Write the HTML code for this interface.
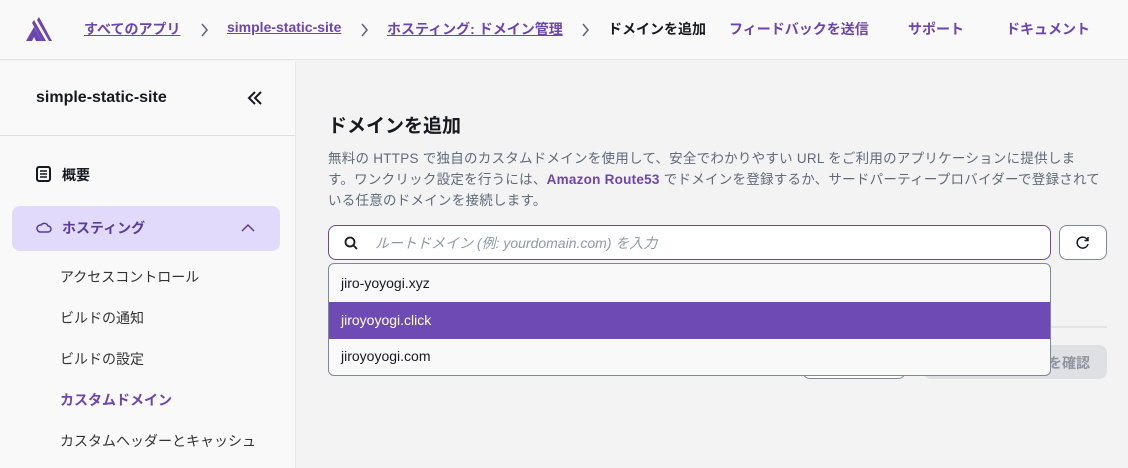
<!DOCTYPE html>
<html><head><meta charset="utf-8"><style>
*{box-sizing:border-box;margin:0;padding:0}
body{width:1128px;height:468px;overflow:hidden;font-family:"Liberation Sans","Noto Sans CJK JP",sans-serif;background:#f3f3f3;color:#16191f;position:relative}
.hdr{position:absolute;left:0;top:0;width:1128px;height:60px;background:#f9f9f9;border-bottom:1px solid #e4e4e8}
.hdr a{position:absolute;top:19px;font-size:14px;font-weight:bold;color:#6c45b0;text-decoration:underline}
.hdr .t{position:absolute;top:19px;font-size:14px;font-weight:bold}
.hdr .n{position:absolute;top:19px;font-size:14px;font-weight:bold;color:#6c45b0}
.sep{position:absolute;top:23px}
.side{position:absolute;left:0;top:61px;width:296px;height:407px;background:#f9f9f9;border-right:1px solid #e8e8ec}
.sb{position:absolute;font-size:14px}
</style></head><body>
<div class="hdr">
<svg style="position:absolute;left:26px;top:17px" width="28" height="26" viewBox="0 0 28 26"><path d="M0 24 L8 10 L16 24 Z M6 24 L8 20 L10 24Z" fill="#6c45b0" fill-rule="evenodd"/><path d="M8 3 L20 24 L16 24 L6 6Z M13 0 L26 24 L23 24 L11 3Z" fill="#6c45b0"/></svg>
<a style="left:84px">すべてのアプリ</a><svg class="sep" style="left:200px" width="9" height="14"><path d="M2 1L7 7L2 13" fill="none" stroke="#5f6b7a" stroke-width="1.6"/></svg>
<a style="left:227px">simple-static-site</a><svg class="sep" style="left:360px" width="9" height="14"><path d="M2 1L7 7L2 13" fill="none" stroke="#5f6b7a" stroke-width="1.6"/></svg>
<a style="left:387px">ホスティング: ドメイン管理</a><svg class="sep" style="left:581px" width="9" height="14"><path d="M2 1L7 7L2 13" fill="none" stroke="#5f6b7a" stroke-width="1.6"/></svg>
<span class="t" style="left:608px">ドメインを追加</span>
<span class="n" style="left:729px">フィードバックを送信</span>
<span class="n" style="left:908px">サポート</span>
<span class="n" style="left:1006px">ドキュメント</span>
</div>
<div class="side">
<div class="sb" style="left:36px;top:28px;font-size:16px;font-weight:bold">simple-static-site</div>
<svg style="position:absolute;left:247px;top:29px" width="16" height="16"><path d="M8 2L2 8L8 14M14 2L8 8L14 14" fill="none" stroke="#16191f" stroke-width="2"/></svg>
<div style="position:absolute;left:0;top:74px;width:296px;border-top:1px solid #e0e0e4"></div>
<svg style="position:absolute;left:36px;top:105px" width="15" height="16"><rect x="1" y="1" width="13" height="14" rx="2" fill="none" stroke="#16191f" stroke-width="2"/><path d="M4 5h7M4 8h7M4 11h7" stroke="#16191f" stroke-width="1.5"/></svg>
<div class="sb" style="left:62px;top:104px;font-weight:bold">概要</div>
<div style="position:absolute;left:12px;top:145px;width:268px;height:45px;background:#e2dafa;border-radius:8px"></div>
<svg style="position:absolute;left:36px;top:160px" width="16" height="12"><path d="M4 11 H12 A3 3 0 0 0 12 5 A4 4 0 0 0 5 4 A3.5 3.5 0 0 0 4 11Z" fill="none" stroke="#5a3a9a" stroke-width="1.5"/></svg>
<div class="sb" style="left:62px;top:157px;font-weight:bold;color:#5a3a9a">ホスティング</div>
<svg style="position:absolute;left:241px;top:162px" width="14" height="9"><path d="M1 8L7 2L13 8" fill="none" stroke="#5a3a9a" stroke-width="1.5"/></svg>
<div class="sb" style="left:60px;top:206px;color:#333">アクセスコントロール</div>
<div class="sb" style="left:60px;top:247px;color:#333">ビルドの通知</div>
<div class="sb" style="left:60px;top:288px;color:#333">ビルドの設定</div>
<div class="sb" style="left:60px;top:329px;color:#6c45b0;font-weight:bold">カスタムドメイン</div>
<div class="sb" style="left:60px;top:370px;color:#333">カスタムヘッダーとキャッシュ</div>
</div>
<div style="position:absolute;left:328px;top:111px;font-size:19px;font-weight:bold">ドメインを追加</div>
<div style="position:absolute;left:328px;top:148px;width:780px;font-size:13.5px;letter-spacing:0.25px;line-height:21px;color:#5f6b7a">無料の HTTPS で独自のカスタムドメインを使用して、安全でわかりやすい URL をご利用のアプリケーションに提供しま<br>す。ワンクリック設定を行うには、<b style="color:#6c45b0">Amazon Route53</b> でドメインを登録するか、サードパーティープロバイダーで登録されて<br>いる任意のドメインを接続します。</div>
<div style="position:absolute;left:328px;top:225px;width:723px;height:35px;background:#fff;border:1.5px solid #6c45b0;border-radius:8px"></div>
<svg style="position:absolute;left:344px;top:236px" width="14" height="14"><circle cx="6" cy="6" r="4.5" fill="none" stroke="#16191f" stroke-width="1.8"/><path d="M9.5 9.5L13 13" stroke="#16191f" stroke-width="1.8"/></svg>
<div style="position:absolute;left:375px;top:233px;font-size:14px;font-style:italic;color:#8d99a8">ルートドメイン (例: yourdomain.com) を入力</div>
<div style="position:absolute;left:1059px;top:225px;width:48px;height:35px;border:1px solid #7d8998;border-radius:8px;background:#fff"></div>
<svg style="position:absolute;left:1075px;top:235px" width="16" height="16"><path d="M12.5 5A5.5 5.5 0 1 0 13 9" fill="none" stroke="#16191f" stroke-width="1.5"/><path d="M13 2V5.5H9.5" fill="none" stroke="#16191f" stroke-width="1.5"/></svg>
<div style="position:absolute;left:328px;top:326px;width:779px;border-top:2px solid #e4e4e8"></div>
<div style="position:absolute;left:802px;top:345px;width:104px;height:34px;border:1px solid #7d8998;border-radius:8px;background:#fff"></div>
<div style="position:absolute;left:923px;top:345px;width:184px;height:34px;border-radius:8px;background:#dfe0e4;font-size:14px;font-weight:bold;color:#8d939c;text-align:right;padding:8px 17px">を確認</div>
<div style="position:absolute;left:328px;top:263px;width:723px;height:113px;background:#f9f9f9;border:1px solid #7d8998;border-radius:6px;overflow:hidden">
<div style="height:38px;padding:11px 12px;font-size:14px">jiro-yoyogi.xyz</div>
<div style="height:37px;padding:10px 12px;font-size:14px;background:#6e4ab5;color:#fff">jiroyoyogi.click</div>
<div style="height:36px;padding:9px 12px;font-size:14px">jiroyoyogi.com</div>
</div>
</body></html>
